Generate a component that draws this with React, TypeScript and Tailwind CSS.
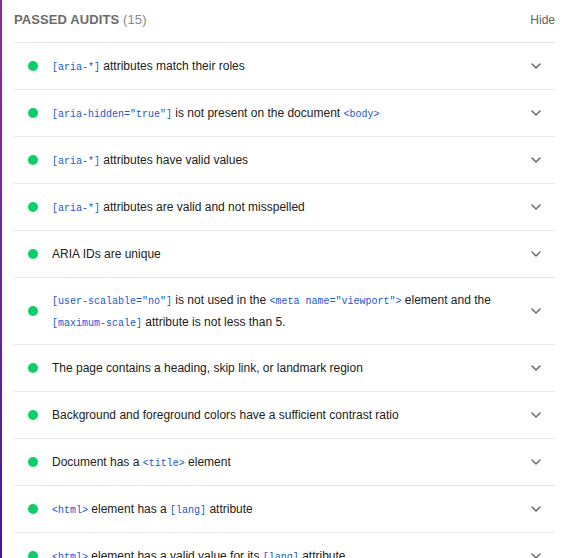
import React from "react";

type Part = string | { code: string };

const audits: Part[][] = [
  [{ code: "[aria-*]" }, " attributes match their roles"],
  [{ code: '[aria-hidden="true"]' }, " is not present on the document ", { code: "<body>" }],
  [{ code: "[aria-*]" }, " attributes have valid values"],
  [{ code: "[aria-*]" }, " attributes are valid and not misspelled"],
  ["ARIA IDs are unique"],
  [
    { code: '[user-scalable="no"]' },
    " is not used in the ",
    { code: '<meta name="viewport">' },
    " element and the ",
    { code: "[maximum-scale]" },
    " attribute is not less than 5.",
  ],
  ["The page contains a heading, skip link, or landmark region"],
  ["Background and foreground colors have a sufficient contrast ratio"],
  ["Document has a ", { code: "<title>" }, " element"],
  [{ code: "<html>" }, " element has a ", { code: "[lang]" }, " attribute"],
  [{ code: "<html>" }, " element has a valid value for its ", { code: "[lang]" }, " attribute"],
];

function Chevron() {
  return (
    <svg width="10" height="6" viewBox="0 0 10 6" fill="none" className="shrink-0">
      <path d="M1 1l4 4 4-4" stroke="#616161" strokeWidth="1.4" strokeLinecap="round" strokeLinejoin="round" />
    </svg>
  );
}

function AuditRow({ parts }: { parts: Part[] }) {
  return (
    <div className="flex items-center border-t border-[#e6e6e6] py-[11px] pl-[14px] pr-[14px]">
      <span className="w-[10px] h-[10px] rounded-full bg-[#0cce6b] shrink-0" />
      <div className="flex-1 min-h-[24px] flex items-center pl-[14px] pr-6">
        <p className="text-[12px] leading-[21.5px] text-[#212121] pt-[1px]">
          {parts.map((p, i) =>
            typeof p === "string" ? (
              <span key={i}>{p}</span>
            ) : (
              <code key={i} className="text-[10px] leading-none text-[#1a56d4] font-['Liberation_Mono',monospace]">
                {p.code}
              </code>
            )
          )}
        </p>
      </div>
      <Chevron />
    </div>
  );
}

export default function App() {
  return (
    <div className="h-[558px] w-[563px] overflow-hidden bg-white flex font-['Liberation_Sans',Arial,sans-serif]">
      <div className="w-[2px] shrink-0 bg-linear-to-b from-[#8c2a9e] to-[#4a12a6]" />
      <div className="flex-1 pl-[12px] pr-[8px]">
        <div className="flex items-center justify-between h-[42px] pb-[2px]">
          <h2 className="text-[13px] text-[#6b6b6b] tracking-[0.1px]">
            <span className="font-bold">PASSED AUDITS</span>{" "}
            <span className="text-[#8a8a8a]">(15)</span>
          </h2>
          <button className="text-[12px] text-[#616161]">Hide</button>
        </div>
        {audits.map((parts, i) => (
          <AuditRow key={i} parts={parts} />
        ))}
      </div>
    </div>
  );
}
